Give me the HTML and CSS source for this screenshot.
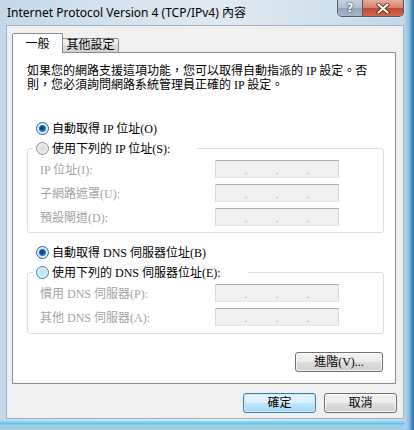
FILE: index.html
```html
<!DOCTYPE html>
<html lang="zh-Hant">
<head>
<meta charset="utf-8">
<title>Internet Protocol Version 4 (TCP/IPv4) 內容</title>
<link rel="stylesheet" href="styles.css">
</head>
<body>
<div class="window">
  <div class="titlebar">
    <div class="title">Internet Protocol Version 4 (TCP/IPv4) 內容</div>
    <div class="caption-btns">
      <div class="cbtn help">?</div>
      <div class="cbtn close">
        <svg width="14" height="11" viewBox="0 0 14 11">
          <path d="M2.5 1.5 L11.5 9.5 M11.5 1.5 L2.5 9.5" stroke="#5a2a22" stroke-width="4" stroke-linecap="round" fill="none"/>
          <path d="M2.5 1.5 L11.5 9.5 M11.5 1.5 L2.5 9.5" stroke="#ffffff" stroke-width="2.2" stroke-linecap="round" fill="none"/>
        </svg>
      </div>
    </div>
  </div>
  <div class="client">
    <div class="tabs">
      <div class="tab active">一般</div>
      <div class="tab">其他設定</div>
    </div>
    <div class="panel">
      <p class="desc">如果您的網路支援這項功能，您可以取得自動指派的 IP 設定。否<br>則，您必須詢問網路系統管理員正確的 IP 設定。</p>

      <div class="radio-row r-first"><span class="radio checked"></span><span>自動取得 IP 位址(O)</span></div>
      <fieldset class="group g-ip">
        <legend class="radio-row legend-ip"><span class="radio"></span><span>使用下列的 IP 位址(S):</span></legend>
        <div class="field"><span class="lbl">IP 位址(I):</span><span class="ipbox"><i>.</i><i>.</i><i>.</i></span></div>
        <div class="field"><span class="lbl">子網路遮罩(U):</span><span class="ipbox"><i>.</i><i>.</i><i>.</i></span></div>
        <div class="field"><span class="lbl">預設閘道(D):</span><span class="ipbox"><i>.</i><i>.</i><i>.</i></span></div>
      </fieldset>

      <div class="radio-row r-dns"><span class="radio checked"></span><span>自動取得 DNS 伺服器位址(B)</span></div>
      <fieldset class="group g-dns">
        <legend class="radio-row legend-dns"><span class="radio hot"></span><span>使用下列的 DNS 伺服器位址(E):</span></legend>
        <div class="field"><span class="lbl">慣用 DNS 伺服器(P):</span><span class="ipbox"><i>.</i><i>.</i><i>.</i></span></div>
        <div class="field"><span class="lbl">其他 DNS 伺服器(A):</span><span class="ipbox"><i>.</i><i>.</i><i>.</i></span></div>
      </fieldset>

      <div class="adv-row"><button class="btn adv">進階(V)...</button></div>
    </div>
    <div class="footer">
      <button class="btn ok">確定</button>
      <button class="btn">取消</button>
    </div>
  </div>
</div>
</body>
</html>
```

FILE: styles.css
```css
* { box-sizing: border-box; }
html, body { margin: 0; padding: 0; }
body {
  width: 414px;
  height: 430px;
  overflow: hidden;
  font-family: "Liberation Serif", "Noto Sans CJK TC", serif;
  font-size: 12px;
  color: #000;
}

.window {
  width: 414px;
  height: 430px;
  display: flex;
  flex-direction: column;
  padding: 0 10px 11px 6px;
  background:
    linear-gradient(90deg, rgba(0,0,0,0) 404px, #b4d2e8 405px, #8fbde0 409px, #3f88c0 412px, #2c6fa4 414px),
    linear-gradient(180deg, rgba(0,0,0,0) 421px, #86dcf2 421px, #5cc4ec 424px, #a6cfe8 425px, #9cc7e3 430px),
    linear-gradient(90deg, #c3d8e9 0, #d5e3ee 30%, #dfe9f1 55%, #cfdfec 80%, #c0d6e8 100%);
}

/* ---------- title bar ---------- */
.titlebar {
  height: 25px;
  display: flex;
  align-items: flex-start;
}
.title {
  font-family: "Noto Sans", "Noto Sans CJK TC", sans-serif;
  font-size: 12px;
  line-height: 26px;
  padding-left: 1px;
  white-space: nowrap;
  color: #000;
}
.caption-btns {
  margin-left: auto;
  display: flex;
  height: 17px;
  border: 1px solid #4f5d6b;
  border-top: none;
  border-radius: 0 0 5px 5px;
  overflow: hidden;
  box-shadow: 0 0 2px rgba(255,255,255,.8);
}
.cbtn {
  display: flex;
  align-items: center;
  justify-content: center;
  height: 100%;
}
.help {
  width: 25px;
  border-right: 1px solid #4f5d6b;
  background: linear-gradient(180deg, #c6d3de 0, #adbfce 50%, #8ea3b6 50%, #a3b7c8 100%);
  color: #fff;
  font-family: "DejaVu Sans", sans-serif;
  font-weight: bold;
  font-size: 12px;
  text-shadow: 0 0 2px #1e2c3a, 0 0 1px #1e2c3a;
}
.close {
  width: 40px;
  background: linear-gradient(180deg, #e7ab99 0, #d7806b 50%, #c34730 50%, #d5664c 100%);
}

/* ---------- client ---------- */
.client {
  flex: 1;
  display: flex;
  flex-direction: column;
  background: #f0f0f0;
  border: 1px solid #9fb1c2;
  padding: 7px 7px 5px 5px;
}

.tabs {
  display: flex;
  align-items: flex-end;
  height: 20px;
  margin-bottom: -1px;
  position: relative;
  z-index: 1;
}
.tab {
  height: 15px;
  width: 56px;
  border: 1px solid #898c95;
  border-left: none;
  background: linear-gradient(180deg, #f2f2f2 0, #ebebeb 50%, #dddddd 50%, #cfcfcf 100%);
  font-size: 12px;
  line-height: 13px;
  text-align: center;
  border-radius: 0 2px 0 0;
}
.tab.active {
  height: 20px;
  width: 51px;
  border-left: 1px solid #898c95;
  border-bottom: none;
  background: #fff;
  line-height: 20px;
  border-radius: 2px 2px 0 0;
}

.panel {
  height: 332px;
  background: #fff;
  border: 1px solid #898c95;
  padding: 0 11px 0 14px;
  display: flex;
  flex-direction: column;
}
.desc {
  margin: 11px 0 0 0;
  line-height: 14px;
  white-space: nowrap;
}

.radio-row {
  display: flex;
  align-items: center;
  height: 16px;
  white-space: nowrap;
}
.r-first { margin-top: 28px; padding-left: 9px; }
.r-dns { margin-top: 11px; padding-left: 9px; }

.radio {
  position: relative;
  width: 13px;
  height: 13px;
  margin-right: 3px;
  border-radius: 50%;
  border: 1px solid #8e8f8f;
  background: radial-gradient(circle at 50% 50%, #d6d6d6 0, #e6e6e6 45%, #f8f8f8 100%);
  flex: none;
}
.radio.hot {
  border-color: #3c7fb1;
  background: radial-gradient(circle at 50% 50%, #b5dff5 0, #cfeafa 45%, #eef8fe 100%);
}
.radio.checked {
  border-color: #2c628b;
  background: radial-gradient(circle at 50% 50%, #aad6f2 0, #d8ecf8 55%, #f4fafe 100%);
}
.radio.checked::after {
  content: "";
  position: absolute;
  left: 2px;
  top: 2px;
  width: 7px;
  height: 7px;
  border-radius: 50%;
  background: radial-gradient(circle at 45% 45%, #0b2f6a 0, #1657a8 40%, #3d9ae6 75%, #7cc6f4 100%);
}

.group {
  margin: 4px 0 0 0;
  padding: 4px 12px 6px 12px;
  border: 1px solid #d5dfe5;
  border-radius: 3px;
  min-width: 0;
}
.g-dns { padding-bottom: 7px; }
.group legend {
  margin-left: -7px;
  padding: 0 0 0 3px;
  background: #fff;
}
.legend-ip { width: 164px; }
.legend-dns { width: 215px; }

.field {
  display: flex;
  align-items: center;
  height: 18px;
  color: #a3a3a3;
  white-space: nowrap;
}
.field + .field { margin-top: 6px; }
.lbl { width: 175px; flex: none; }
.ipbox {
  width: 124px;
  height: 18px;
  display: flex;
  justify-content: space-evenly;
  align-items: flex-end;
  background: #f0f0f0;
  border: 1px solid #dadada;
  border-top-color: #a9a9a9;
  border-bottom-color: #e5e5e5;
}
.ipbox i {
  font-style: normal;
  color: #aaaaaa;
  font-size: 11px;
  line-height: 13px;
}

.adv-row {
  display: flex;
  justify-content: flex-end;
  margin-top: 18px;
  padding-right: 1px;
}

.btn {
  font-family: "Liberation Serif", "Noto Sans CJK TC", serif;
  font-size: 12px;
  color: #000;
  height: 20px;
  width: 73px;
  padding: 0;
  line-height: 18px;
  border: 1px solid #707070;
  border-radius: 3px;
  background: linear-gradient(180deg, #f2f2f2 0, #ebebeb 50%, #dddddd 50%, #cfcfcf 100%);
  box-shadow: inset 0 0 0 1px rgba(255,255,255,.75);
}
.btn.adv { width: 88px; }
.btn.ok {
  border-color: #3c7fb1;
  background: linear-gradient(180deg, #eaf6fd 0, #d9f0fc 50%, #bee6fd 50%, #a7d9f5 100%);
  box-shadow: inset 0 0 0 1px #c8eafb;
}

.footer {
  display: flex;
  justify-content: flex-end;
  gap: 8px;
  margin-top: 9px;
  margin-right: -1px;
}
```
